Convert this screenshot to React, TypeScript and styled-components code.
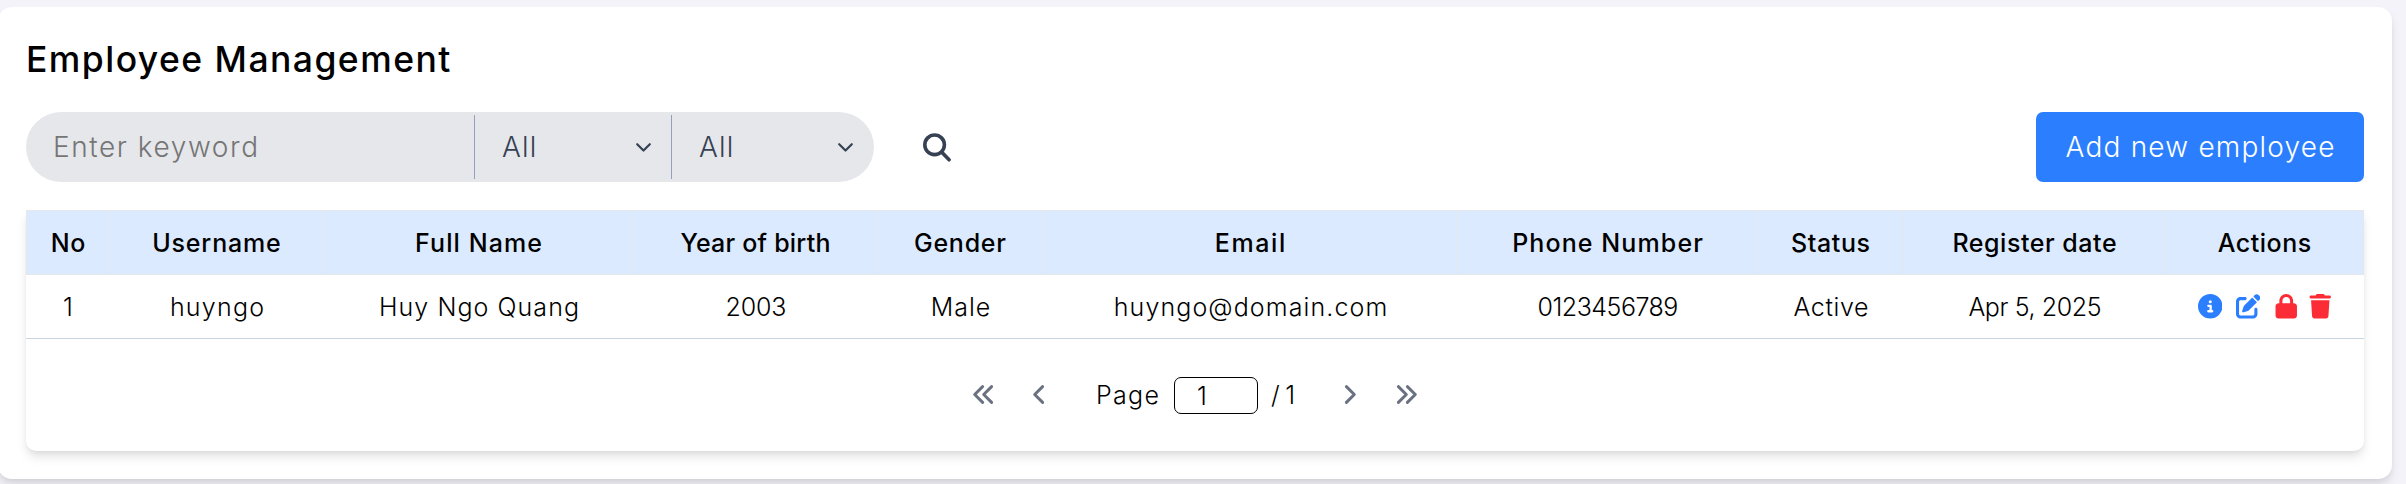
import React from "react";
import styled, { createGlobalStyle } from "styled-components";
import {
  FaCircleInfo,
  FaPenToSquare,
  FaLock,
  FaTrash,
} from "react-icons/fa6";

const Global = createGlobalStyle`
  *, *::before, *::after { box-sizing: border-box; }
  body {
    margin: 0;
    background: #f3f3f9;
    color: #000;
    font-family: Inter, "Open Sans", sans-serif;
    overflow: hidden;
  }
`;

const Page = styled.main`
  height: 484px;
  padding: 7px 14px 0 0;
  overflow: hidden;
`;

const Card = styled.section`
  height: 472px;
  margin-left: -2px;
  padding: 0 28px;
  display: flex;
  flex-direction: column;
  background: #fff;
  border-radius: 14px;
  box-shadow: 0 7px 10.5px -1.75px rgba(0, 0, 0, 0.1), 0 3.5px 7px -3.5px rgba(0, 0, 0, 0.1);
`;

/* The negative margin removes the tracking after the last letter, so centred text stays centred. */
const Text = styled.span<{ $track?: number }>`
  display: inline-block;
  white-space: nowrap;
  letter-spacing: ${(p) => p.$track ?? 0}px;
  margin-right: ${(p) => -(p.$track ?? 0)}px;
`;

const Title = styled.h1`
  margin: 0;
  height: 105px;
  padding-top: 32px;
  font-size: 35.5px;
  line-height: 42px;
  font-weight: 500;
`;

const Toolbar = styled.div`
  display: flex;
  align-items: center;
  justify-content: space-between;
  height: 70px;
`;

const SearchGroup = styled.div`
  display: flex;
  align-items: center;
`;

const Filters = styled.div`
  display: flex;
  align-items: center;
  width: 848px;
  height: 70px;
  border-radius: 35px;
  background: #e5e7eb;
  font-size: 28px;
`;

const Keyword = styled.div`
  width: 448px;
  padding-left: 27px;
  color: #757575;
  font-weight: 300;
`;

const Select = styled.div<{ $width: number; $end: number }>`
  display: flex;
  align-items: center;
  justify-content: space-between;
  width: ${(p) => p.$width}px;
  height: 64px;
  padding: 0 ${(p) => p.$end}px 0 27px;
  border-left: 1px solid #90a1b9;
  color: #364153;
  font-weight: 300;
`;

const SearchButton = styled.button`
  display: flex;
  margin: 0 0 0 49px;
  padding: 0;
  border: 0;
  background: none;
  color: #364153;
`;

const AddButton = styled.button`
  width: 328px;
  height: 70px;
  padding: 0;
  border: 0;
  border-radius: 7px;
  background: #2b7fff;
  color: #fff;
  font: 350 28px Inter, sans-serif;
`;

const Panel = styled.div`
  height: 241px;
  margin-top: 28px;
  border-radius: 0 0 10.5px 10.5px;
  box-shadow: 0 7px 10.5px -1.75px rgba(0, 0, 0, 0.1), 0 3.5px 7px -3.5px rgba(0, 0, 0, 0.1);
`;

const Table = styled.table`
  width: 100%;
  table-layout: fixed;
  border-spacing: 0;
  font-size: 25px;
  line-height: 30px;
`;

const Col = styled.col<{ $width: number }>`
  width: ${(p) => p.$width}px;
`;

const HeadCell = styled.th`
  height: 65px;
  padding: 0;
  background: #dbeafe;
  border: 1px solid #e5e7eb;
  border-left-width: 0;
  font-weight: 500;
  &:first-child { border-left-width: 1px; }
`;

const Cell = styled.td`
  height: 64px;
  padding: 0;
  text-align: center;
  font-weight: 350;
  border-bottom: 1px solid #cad5e2;
`;

const Actions = styled.div`
  display: flex;
  align-items: center;
  justify-content: center;
  gap: 13.5px;
  font-size: 24.5px;
`;

const Action = styled.span<{ $danger?: boolean; $pull?: number }>`
  display: flex;
  margin-left: ${(p) => -(p.$pull ?? 0)}px;
  color: ${(p) => (p.$danger ? "#fb2c36" : "#2b7fff")};
`;

const Pagination = styled.nav`
  display: flex;
  align-items: center;
  justify-content: center;
  height: 112px;
  font-size: 25px;
  font-weight: 350;
`;

const PageStep = styled.span<{ $start?: number; $end?: number }>`
  display: flex;
  margin: 0 ${(p) => p.$end ?? 0}px 2px ${(p) => p.$start ?? 0}px;
  color: #6a7282;
`;

const PageBox = styled.span`
  display: flex;
  align-items: center;
  width: 84px;
  height: 37px;
  margin: 1px 13px 0 15px;
  padding-left: 22px;
  border: 1px solid #000;
  border-radius: 7px;
`;

const Stroke = styled.svg<{ $weight: number }>`
  display: block;
  overflow: visible;
  fill: none;
  stroke: currentColor;
  stroke-width: ${(p) => p.$weight};
  stroke-linecap: round;
  stroke-linejoin: round;
`;

const Caret = () => (
  <Stroke $weight={2.2} width="15" height="9" viewBox="0 0 15 9">
    <path d="M1.2 1.2 7.5 7.5 13.8 1.2" />
  </Stroke>
);

const Magnifier = () => (
  <Stroke $weight={3.6} width="28" height="29" viewBox="0 0 28 29">
    <circle cx="11.6" cy="11.8" r="9.8" />
    <path d="m18.8 19.2 7.3 7.6" />
  </Stroke>
);

const Chevron = ({ double, flip }: { double?: boolean; flip?: boolean }) => (
  <Stroke
    $weight={3}
    width={double ? 20 : 11}
    height="19"
    viewBox={`0 0 ${double ? 20 : 11} 19`}
  >
    <g transform={flip ? `matrix(-1 0 0 1 ${double ? 20 : 11} 0)` : undefined}>
      <path d="M9.6 1.6 1.7 9.5 9.6 17.4" />
      {double && <path d="M18.6 1.6 10.7 9.5 18.6 17.4" />}
    </g>
  </Stroke>
);

const columns = [
  { label: "No", track: 0.55, width: 84, value: "1", valueTrack: 0 },
  { label: "Username", track: 0.83, width: 214, value: "huyngo", valueTrack: 1.25 },
  { label: "Full Name", track: 1.07, width: 310, value: "Huy Ngo Quang", valueTrack: 1.06 },
  { label: "Year of birth", track: 0.21, width: 244, value: "2003", valueTrack: -0.2 },
  { label: "Gender", track: 0.75, width: 165, value: "Male", valueTrack: 1 },
  { label: "Email", track: 1.59, width: 415, value: "huyngo@domain.com", valueTrack: 1.1 },
  { label: "Phone Number", track: 1.11, width: 300, value: "0123456789", valueTrack: -0.5 },
  { label: "Status", track: 0.61, width: 146, value: "Active", valueTrack: 0.6 },
  { label: "Register date", track: 0.54, width: 262, value: "Apr 5, 2025", valueTrack: -0.4 },
];

export default function App() {
  return (
    <>
      <Global />
      <Page>
        <Card>
          <Title>
            <Text $track={1.45}>Employee Management</Text>
          </Title>
          <Toolbar>
            <SearchGroup>
              <Filters>
                <Keyword>
                  <Text $track={1.57}>Enter keyword</Text>
                </Keyword>
                <Select $width={197} $end={20}>
                  <Text $track={1.2}>All</Text>
                  <Caret />
                </Select>
                <Select $width={203} $end={21}>
                  <Text $track={1.2}>All</Text>
                  <Caret />
                </Select>
              </Filters>
              <SearchButton aria-label="Search">
                <Magnifier />
              </SearchButton>
            </SearchGroup>
            <AddButton>
              <Text $track={1.2}>Add new employee</Text>
            </AddButton>
          </Toolbar>
          <Panel>
            <Table>
              <colgroup>
                {columns.map((c) => (
                  <Col key={c.label} $width={c.width} />
                ))}
                <Col $width={198} />
              </colgroup>
              <thead>
                <tr>
                  {columns.map((c) => (
                    <HeadCell key={c.label}>
                      <Text $track={c.track}>{c.label}</Text>
                    </HeadCell>
                  ))}
                  <HeadCell>
                    <Text $track={0.55}>Actions</Text>
                  </HeadCell>
                </tr>
              </thead>
              <tbody>
                <tr>
                  {columns.map((c) => (
                    <Cell key={c.label}>
                      <Text $track={c.valueTrack}>{c.value}</Text>
                    </Cell>
                  ))}
                  <Cell>
                    <Actions>
                      <Action><FaCircleInfo /></Action>
                      <Action><FaPenToSquare /></Action>
                      <Action $danger><FaLock /></Action>
                      <Action $danger $pull={3.5}><FaTrash /></Action>
                    </Actions>
                  </Cell>
                </tr>
              </tbody>
            </Table>
            <Pagination>
              <PageStep $end={40}><Chevron double /></PageStep>
              <PageStep $end={52}><Chevron /></PageStep>
              <Text $track={1.35}>Page</Text>
              <PageBox>1</PageBox>
              <Text $track={-0.8}>/ 1</Text>
              <PageStep $start={50}><Chevron flip /></PageStep>
              <PageStep $start={41}><Chevron double flip /></PageStep>
            </Pagination>
          </Panel>
        </Card>
      </Page>
    </>
  );
}
